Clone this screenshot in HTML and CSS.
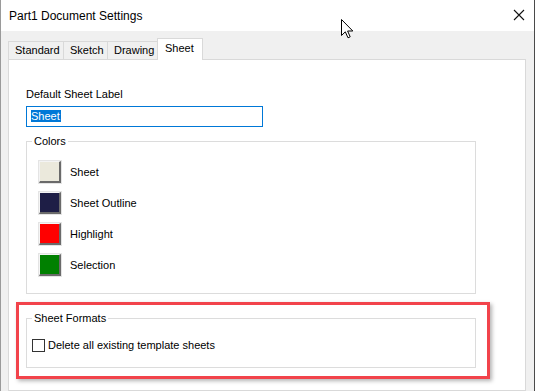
FILE: index.html
```html
<!DOCTYPE html>
<html>
<head>
<meta charset="utf-8">
<title>Part1 Document Settings</title>
<link rel="stylesheet" href="styles.css">
</head>
<body>
<div class="window">
  <div class="titlebar">
    <span class="title">Part1 Document Settings</span>
    <svg class="close" width="12" height="12" viewBox="0 0 12 12"><path d="M1 1 L11 11 M11 1 L1 11" stroke="#111" stroke-width="1.1" fill="none"/></svg>
  </div>
  <div class="client">
    <div class="tabs">
      <div class="tab t-standard">Standard</div>
      <div class="tab t-sketch">Sketch</div>
      <div class="tab t-drawing">Drawing</div>
      <div class="tab active t-sheet">Sheet</div>
    </div>
    <div class="panel">
      <div class="field-label">Default Sheet Label</div>
      <div class="textbox"><span class="sel">Sheet</span></div>
      <fieldset class="group colors">
        <legend>Colors</legend>
        <div class="crow"><span class="swatch sw-sheet"></span><span>Sheet</span></div>
        <div class="crow"><span class="swatch sw-outline"></span><span>Sheet Outline</span></div>
        <div class="crow"><span class="swatch sw-highlight"></span><span>Highlight</span></div>
        <div class="crow"><span class="swatch sw-selection"></span><span>Selection</span></div>
      </fieldset>
      <fieldset class="group formats">
        <legend>Sheet Formats</legend>
        <label class="check"><span class="box"></span><span>Delete all existing template sheets</span></label>
      </fieldset>
    </div>
  </div>
  <div class="annot"></div>
  <svg class="cursor" width="14" height="21" viewBox="0 0 14 21"><path d="M0.5 0.5 L0.5 16.5 L4.3 12.8 L7 18.8 L9.2 17.8 L6.6 12 L11.8 12 Z" fill="#fff" stroke="#000" stroke-width="1" stroke-linejoin="miter"/></svg>
</div>
</body>
</html>
```
FILE: styles.css
```css
* { box-sizing: border-box; }
html, body { margin: 0; padding: 0; }
body {
  font-family: "Liberation Sans", Arial, sans-serif;
  font-size: 11px;
  color: #000;
  background: #f0f0f0;
  overflow: hidden;
}
.window {
  position: relative;
  width: 535px;
  height: 391px;
  display: flex;
  flex-direction: column;
  border-left: 1px solid #9a9a9a;
  border-right: 1px solid #4a4a4a;
  overflow: hidden;
}
.titlebar {
  height: 31px;
  background: #fff;
  display: flex;
  align-items: center;
  justify-content: space-between;
  padding: 0 9px 0 8px;
  flex: none;
}
.title { font-size: 12px; margin-top: 1px; }
.close { display: block; margin-top: -1px; }
.client {
  flex: 1;
  background: #f0f0f0;
  padding: 7px 8px 0 7px;
  display: flex;
  flex-direction: column;
}
.tabs {
  display: flex;
  align-items: flex-end;
  height: 21px;
  flex: none;
}
.tab {
  height: 18px;
  padding: 0 0 0 6px;
  border: 1px solid #d9d9d9;
  border-bottom: none;
  border-left: none;
  line-height: 17px;
  background: #f0f0f0;
  white-space: nowrap;
}
.tab:first-child { border-left: 1px solid #d9d9d9; }
.t-standard { width: 56px; }
.t-sketch { width: 44px; }
.t-drawing { width: 50px; }
.t-sheet { width: 46px; }
.tab.active {
  height: 22px;
  margin-bottom: -1px;
  background: #fff;
  position: relative;
  z-index: 1;
  border-left: 1px solid #d9d9d9;
  margin-left: -1px;
  padding: 0 0 0 7px;
  line-height: 19px;
}
.panel {
  flex: 1;
  background: #fff;
  border: 1px solid #d9d9d9;
  padding: 28px 0 0 17px;
}
.field-label { line-height: 13px; height: 13px; }
.textbox {
  margin-top: 5px;
  width: 237px;
  height: 21px;
  border: 1px solid #0078d7;
  padding: 3px 0 0 4px;
}
.sel {
  display: inline-block;
  background: #0078d7;
  color: #fff;
  line-height: 12px;
  height: 12px;
  padding: 0 1px 0 0;
}
.group {
  margin: 0;
  width: 450px;
  border: 1px solid #dcdcdc;
  padding: 0 0 0 5px;
  min-width: 0;
}
.group legend {
  padding: 0 2px;
  margin-left: 0;
  line-height: 13px;
}
.colors {
  margin-top: 8px;
  padding-top: 13px;
  padding-bottom: 17px;
  display: flex;
  flex-direction: column;
  gap: 9px;
}
.crow {
  display: flex;
  align-items: center;
  gap: 9px;
  height: 22px;
  margin-left: 7px;
}
.swatch {
  width: 22px;
  height: 22px;
  border-top: 1px solid #f4f4f4;
  border-left: 1px solid #f4f4f4;
  border-right: 2px solid #6a6a6a;
  border-bottom: 2px solid #6a6a6a;
  box-shadow: 0 0 0 1px #e4e4e4;
}
.sw-sheet { background: #ebe9dc; }
.sw-outline { background: #1e1e46; }
.sw-highlight { background: #ff0000; }
.sw-selection { background: #008000; }
.formats {
  margin-top: 18px;
  padding: 13px 0 15px 5px;
}
.check {
  display: flex;
  align-items: center;
  gap: 3px;
  height: 14px;
}
.box {
  width: 13px;
  height: 13px;
  border: 1px solid #333;
  background: #fff;
}
.annot {
  position: absolute;
  left: 15px;
  top: 302px;
  width: 474px;
  height: 77px;
  border: 3px solid #f2434b;
  box-shadow: 2px 2px 4px rgba(0,0,0,0.3);
  pointer-events: none;
}
.cursor {
  position: absolute;
  left: 340px;
  top: 19px;
}
```
